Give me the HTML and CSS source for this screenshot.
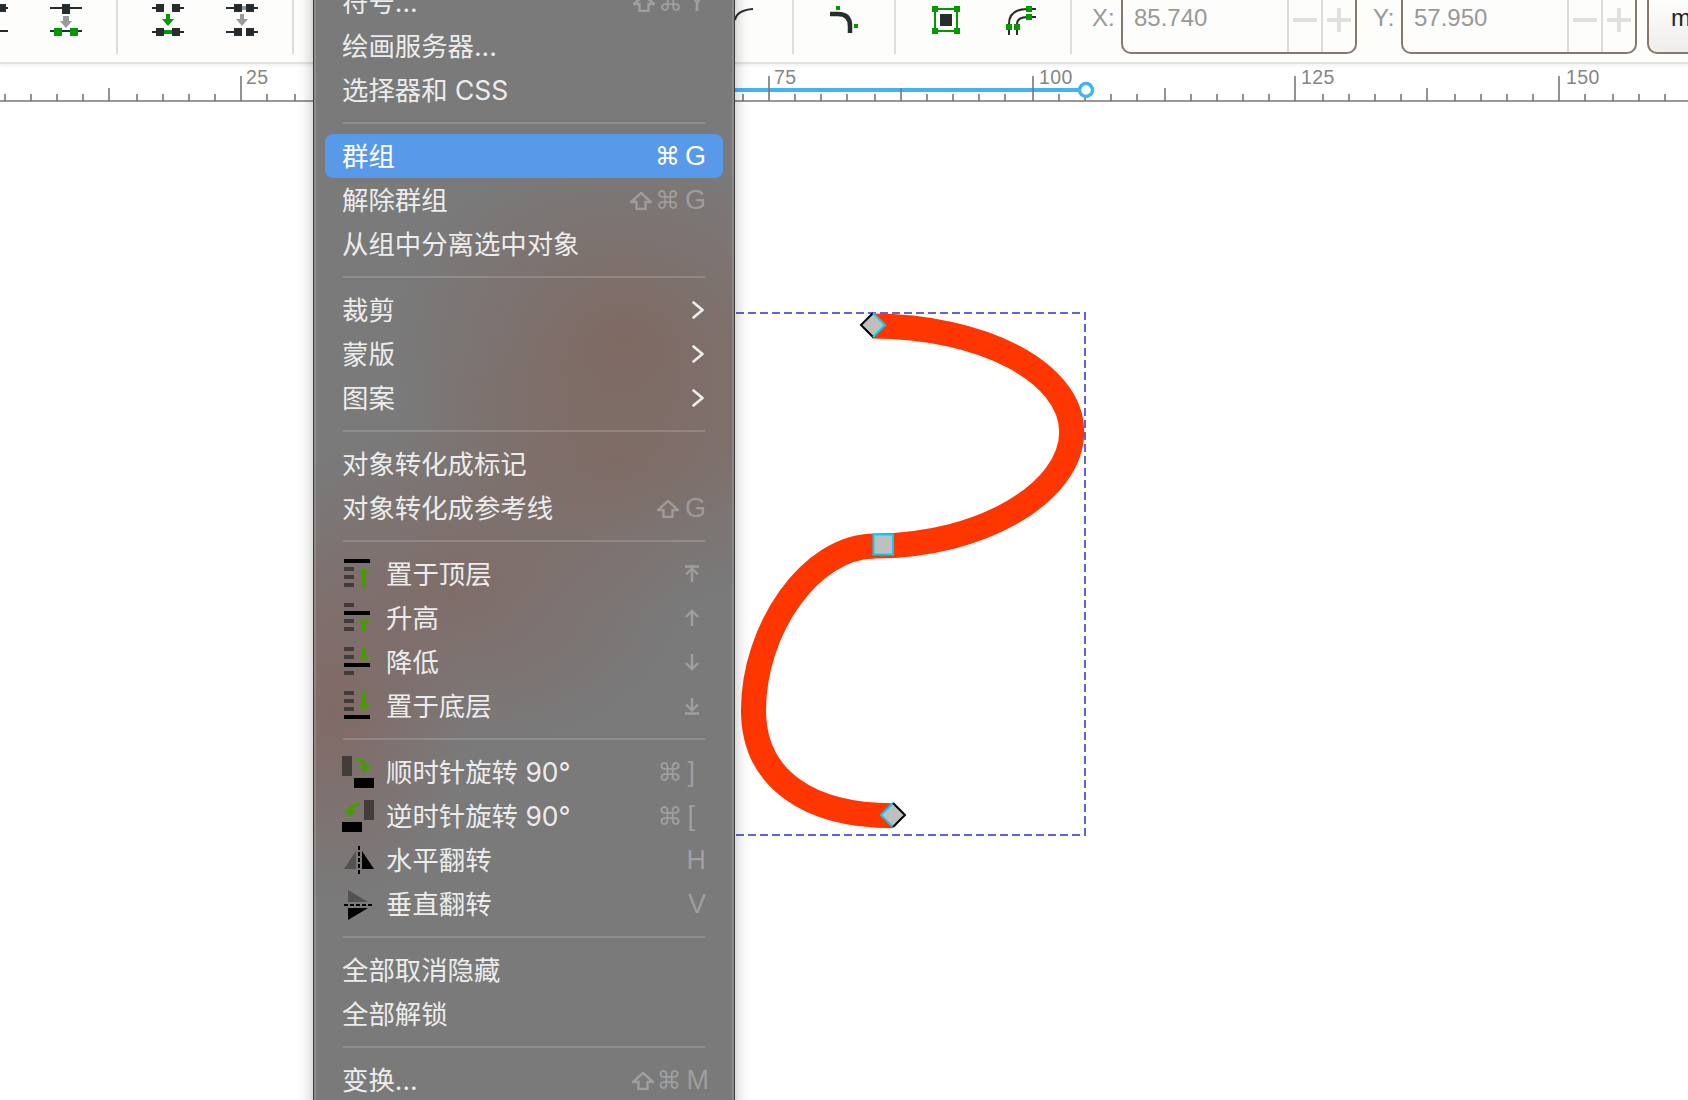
FILE: index.html
```html
<!DOCTYPE html>
<html lang="zh-CN">
  <head>
    <meta charset="utf-8">
    <title>Inkscape</title>
    <link rel="stylesheet" href="styles.css">
  </head>

  <body>
    <div class="window">
      <!-- snap / coordinate toolbar -->
      <header class="toolbar">
        <div class="tool-group group-first">
          <svg class="tool" viewBox="0 0 32 44"><rect x="22" y="4" width="8" height="8" class="dark"/><rect x="16" y="7" width="16" height="2" class="dark"/><rect x="16" y="30" width="16" height="2" class="dark"/></svg>
          <svg class="tool" viewBox="0 0 32 44"><rect y="7" width="32" height="2" class="dark"/><rect x="12" y="4" width="8" height="10" class="dark"/><path d="M13 16h6v5h3l-6 7-6-7h3z" class="grey"/><rect y="30" width="32" height="2" class="dark"/><rect x="4" y="28" width="8" height="8" class="green"/><rect x="20" y="28" width="8" height="8" class="green"/></svg>
        </div>
        <div class="tool-group group-snap">
          <svg class="tool" viewBox="0 0 32 44"><path d="M0 7h4v2H0zM28 7h4v2h-4zM0 31h4v2H0zM28 31h4v2h-4z" class="dark"/><rect x="4" y="4" width="8" height="8" class="dark"/><rect x="20" y="4" width="8" height="8" class="dark"/><path d="M14 14h4v5h4l-6 7-6-7h4z" class="green"/><rect x="4" y="28" width="8" height="8" class="dark"/><rect x="20" y="28" width="8" height="8" class="dark"/><rect x="12" y="30" width="8" height="4" class="green"/></svg>
          <svg class="tool" viewBox="0 0 32 44"><path d="M0 7h8v2H0zM28 7h4v2h-4zM0 31h8v2H0zM28 31h4v2h-4z" class="dark"/><rect x="16" y="6" width="4" height="4" class="grey"/><rect x="8" y="4" width="8" height="8" class="dark"/><rect x="20" y="4" width="8" height="8" class="dark"/><path d="M14 14h4v5h4l-6 7-6-7h4z" class="grey"/><rect x="8" y="28" width="8" height="8" class="dark"/><rect x="20" y="28" width="8" height="8" class="dark"/></svg>
        </div>
        <div class="tool-group group-behind">
          <svg class="tool" viewBox="0 0 32 44"><path d="M12 20Q14 10 30 9" class="line-thin"/></svg>
        </div>
        <div class="tool-group group-mid">
          <svg class="tool" viewBox="0 0 32 44"><path d="M2 14H10Q22 14 22 26V33" class="line-thick"/><rect x="8" y="6" width="4" height="4" class="green"/><rect x="26" y="24" width="4" height="4" class="green"/></svg>
        </div>
        <div class="tool-group group-mid group-last">
          <svg class="tool" viewBox="0 0 32 44"><rect x="5" y="9" width="22" height="22" class="frame"/><rect x="10" y="14" width="12" height="12" class="dark"/><path d="M2 6h6v6H2zM24 6h6v6h-6zM2 28h6v6H2zM24 28h6v6h-6z" class="green"/></svg>
          <svg class="tool" viewBox="0 0 32 44"><path d="M5 35V24Q5 9 24 9H32M13 35V24Q13 17 24 17H32" class="line-thin"/><path d="M2 24h6v6H2zM10 24h6v6h-6zM22 6h6v6h-6zM22 14h6v6h-6z" class="green"/></svg>
        </div>
        <span class="coord-label label-x">X:</span>
        <div class="field field-x">
          <span class="field-value">85.740</span>
          <span class="step"><i class="minus"></i></span>
          <span class="step"><i class="plus"></i></span>
        </div>
        <span class="coord-label label-y">Y:</span>
        <div class="field">
          <span class="field-value">57.950</span>
          <span class="step"><i class="minus"></i></span>
          <span class="step"><i class="plus"></i></span>
        </div>
        <div class="unit-btn">mm</div>
      </header>

      <!-- ruler -->
      <svg class="ruler" viewBox="0 64 1688 38">
        <rect x="700" y="88" width="386" height="4" fill="#42b4f6"/>
        <path class="ticks" d="M0 101H1688M241 76V101M769 76V101M1033 76V101M1295 76V101M1559 76V101M109 88V101M901 88V101M1165 88V101M1427 88V101M5 94V101M31 94V101M57 94V101M83 94V101M137 94V101M163 94V101M189 94V101M215 94V101M267 94V101M295 94V101M743 94V101M795 94V101M821 94V101M847 94V101M875 94V101M927 94V101M953 94V101M979 94V101M1005 94V101M1059 94V101M1085 94V101M1111 94V101M1137 94V101M1191 94V101M1217 94V101M1243 94V101M1269 94V101M1323 94V101M1349 94V101M1375 94V101M1401 94V101M1455 94V101M1481 94V101M1507 94V101M1533 94V101M1585 94V101M1613 94V101M1639 94V101M1665 94V101"/>
        <circle cx="1086" cy="90" r="6.5" fill="#fff" stroke="#42b4f6" stroke-width="3.5"/>
        <text x="246" y="84">25</text>
        <text x="774" y="84">75</text>
        <text x="1039" y="84">100</text>
        <text x="1301" y="84">125</text>
        <text x="1566" y="84">150</text>
      </svg>

      <!-- drawing -->
      <svg class="canvas" viewBox="0 102 1688 998">
        <path class="bbox" d="M700 313H1085V835H700"/>
        <path class="stroke" d="M872 326C982 326 1071.7 372 1071.7 432C1071.7 492 982 546 875 546C810 546 753.5 630 753.5 710C753.5 780 810 815.7 893 815.7"/>
        <path class="node" d="M873 313L885 325L873 337L861 325Z"/>
        <path class="edge-black" d="M873 337L861 325L873 313"/>
        <path class="edge-cyan" d="M873 313L885 325L873 337"/>
        <rect class="node edge-cyan" x="873.5" y="534.5" width="19.5" height="20"/>
        <path class="node" d="M893 803L905 815L893 827L881 815Z"/>
        <path class="edge-cyan" d="M893 827L881 815L893 803"/>
        <path class="edge-black" d="M893 803L905 815L893 827"/>
      </svg>

      <!-- context menu -->
      <div class="menu">
        <div class="row"><span class="label">符号...</span><span class="keys off"><svg class="shift" viewBox="0 0 22 18"><path d="M11 1L21 10H15.5V17H6.5V10H1Z"/></svg><b>⌘</b>Y</span></div>
        <div class="row"><span class="label">绘画服务器...</span></div>
        <div class="row"><span class="label">选择器和 CSS</span></div>
        <div class="sep"></div>
        <div class="row active"><span class="label">群组</span><span class="keys"><b>⌘</b>G</span></div>
        <div class="row"><span class="label">解除群组</span><span class="keys off"><svg class="shift" viewBox="0 0 22 18"><path d="M11 1L21 10H15.5V17H6.5V10H1Z"/></svg><b>⌘</b>G</span></div>
        <div class="row"><span class="label">从组中分离选中对象</span></div>
        <div class="sep"></div>
        <div class="row"><span class="label">裁剪</span><svg class="chevron" viewBox="0 0 12 18"><path d="M1.5 1.5L10.5 9L1.5 16.5"/></svg></div>
        <div class="row"><span class="label">蒙版</span><svg class="chevron" viewBox="0 0 12 18"><path d="M1.5 1.5L10.5 9L1.5 16.5"/></svg></div>
        <div class="row"><span class="label">图案</span><svg class="chevron" viewBox="0 0 12 18"><path d="M1.5 1.5L10.5 9L1.5 16.5"/></svg></div>
        <div class="sep"></div>
        <div class="row"><span class="label">对象转化成标记</span></div>
        <div class="row"><span class="label">对象转化成参考线</span><span class="keys off"><svg class="shift" viewBox="0 0 22 18"><path d="M11 1L21 10H15.5V17H6.5V10H1Z"/></svg>G</span></div>
        <div class="sep"></div>
        <div class="row">
          <span class="label"><svg class="icon" viewBox="0 0 32 32"><rect x="2" y="1" width="26" height="4" class="bar"/><path d="M2 9h10v4H2zM2 17h10v4H2zM2 25h10v4H2z" class="dash"/><path d="M22 10l6 6h-4v13h-4V16h-4z" class="arrow"/></svg>置于顶层</span>
          <svg class="arrow-key" viewBox="0 0 16 18"><path d="M1 1.5H15M8 17V4M2 9.5L8 3.5L14 9.5"/></svg>
        </div>
        <div class="row">
          <span class="label"><svg class="icon" viewBox="0 0 32 32"><rect x="2" y="9" width="26" height="4" class="bar"/><path d="M2 1h10v4H2zM2 17h10v4H2zM2 25h10v4H2z" class="dash"/><path d="M22 16l6 5h-4v8h-4v-8h-4z" class="arrow"/></svg>升高</span>
          <svg class="arrow-key" viewBox="0 0 16 18"><path d="M8 17V2M2 8L8 2L14 8"/></svg>
        </div>
        <div class="row">
          <span class="label"><svg class="icon" viewBox="0 0 32 32"><rect x="2" y="17" width="26" height="4" class="bar"/><path d="M2 1h10v4H2zM2 9h10v4H2zM2 25h10v4H2z" class="dash"/><path d="M20 1h4v8h4l-6 6-6-6h4z" class="arrow"/></svg>降低</span>
          <svg class="arrow-key" viewBox="0 0 16 18"><path d="M8 1V16M2 10L8 16L14 10"/></svg>
        </div>
        <div class="row">
          <span class="label"><svg class="icon" viewBox="0 0 32 32"><rect x="2" y="25" width="26" height="4" class="bar"/><path d="M2 1h10v4H2zM2 9h10v4H2zM2 17h10v4H2z" class="dash"/><path d="M20 1h4v13h4l-6 7-6-7h4z" class="arrow"/></svg>置于底层</span>
          <svg class="arrow-key" viewBox="0 0 16 18"><path d="M8 1V13M2 7.5L8 13.5L14 7.5M1 16.5H15"/></svg>
        </div>
        <div class="sep"></div>
        <div class="row">
          <span class="label"><svg class="icon" viewBox="0 0 32 32"><rect width="10" height="20" class="dash"/><rect x="12" y="22" width="20" height="10" class="bar"/><path d="M14 3Q23 4 23 11" class="arrow-line"/><path d="M17 10H29L23 17Z" class="arrow"/></svg>顺时针旋转 90°</span>
          <span class="keys off bracket"><b>⌘</b>]</span>
        </div>
        <div class="row">
          <span class="label"><svg class="icon" viewBox="0 0 32 32"><rect x="22" width="10" height="20" class="dash"/><rect y="22" width="20" height="10" class="bar"/><path d="M18 4Q8 5 8 11" class="arrow-line"/><path d="M2 10H14L8 17Z" class="arrow"/></svg>逆时针旋转 90°</span>
          <span class="keys off bracket"><b>⌘</b>[</span>
        </div>
        <div class="row">
          <span class="label"><svg class="icon" viewBox="0 0 32 32"><path d="M2 25H14V7Z" class="flip-grey"/><path d="M20 7V25H32Z" class="bar"/><path d="M17 2V30" class="flip-line"/></svg>水平翻转</span>
          <span class="keys off">H</span>
        </div>
        <div class="row">
          <span class="label"><svg class="icon" viewBox="0 0 32 32"><path d="M6 2V14H26Z" class="flip-grey"/><path d="M6 20H26L6 32Z" class="bar"/><path d="M2 17H30" class="flip-line"/></svg>垂直翻转</span>
          <span class="keys off">V</span>
        </div>
        <div class="sep"></div>
        <div class="row"><span class="label">全部取消隐藏</span></div>
        <div class="row"><span class="label">全部解锁</span></div>
        <div class="sep"></div>
        <div class="row"><span class="label">变换...</span><span class="keys off keys-wide"><svg class="shift" viewBox="0 0 22 18"><path d="M11 1L21 10H15.5V17H6.5V10H1Z"/></svg><b>⌘</b>M</span></div>
      </div>
    </div>
  </body>
</html>
```

FILE: styles.css
```css
* {
  box-sizing: border-box;
  margin: 0;
}
html, body {
  height: 100%;
  overflow: hidden;
  background: #fff;
}
.window {
  position: relative;
  width: 1688px;
  height: 1100px;
  overflow: hidden;
  display: flex;
  flex-direction: column;
  font-family: "Liberation Sans", sans-serif;
}

/* toolbar */
.toolbar {
  display: flex;
  align-items: flex-start;
  flex: none;
  height: 64px;
  background: #fdfdfb;
  border-bottom: 2px solid #e2e2df;
  box-shadow: 0 1px 4px rgba(0, 0, 0, 0.08);
  overflow: hidden;
}
.tool-group {
  display: flex;
  gap: 42px;
  height: 54px;
  border-right: 2px solid #dededb;
  flex: none;
}
.group-first { width: 118px; padding-right: 34px; justify-content: flex-end; }
.group-snap { padding: 0 34px; }
.group-behind { padding: 0 37px 0 429px; }
.group-mid { padding: 0 34px; }
.group-last { margin-right: 20px; }
.tool {
  width: 32px;
  height: 44px;
  flex: none;
  overflow: visible;
}
.dark { fill: #272c2f; }
.grey { fill: #9a9a9a; }
.green { fill: #009a00; }
.frame { fill: none; stroke: #009a00; stroke-width: 2; }
.line-thin { fill: none; stroke: #272c2f; stroke-width: 2; }
.line-thick { fill: none; stroke: #272c2f; stroke-width: 4.5; }

.coord-label {
  flex: none;
  font-size: 24px;
  line-height: 36px;
  color: #999;
}
.label-x { width: 29px; }
.label-y { width: 28px; margin-left: 16px; }
.field {
  display: flex;
  flex: none;
  width: 236px;
  height: 54px;
  border: 2px solid #85796e;
  border-top: none;
  border-radius: 0 0 10px 10px;
}
.field-value {
  flex: 1;
  padding-left: 11px;
  font-size: 24px;
  line-height: 36px;
  color: #999;
}
.step {
  position: relative;
  flex: none;
  width: 34px;
  border-left: 2px solid #dedbd6;
}
.step i {
  display: block;
  width: 24px;
  height: 4px;
  margin: 18px 0 0 4px;
  background: #e0e0dc;
}
.plus {
  position: relative;
}
.plus::after {
  content: "";
  position: absolute;
  left: 10px;
  top: -10px;
  width: 4px;
  height: 24px;
  background: #e0e0dc;
}
.unit-btn {
  flex: none;
  width: 80px;
  height: 54px;
  margin-left: 10px;
  padding-left: 22px;
  font-size: 24px;
  line-height: 36px;
  color: #222;
  background: linear-gradient(#fdfdfb, #eeedeb);
  border: 2px solid #85796e;
  border-top: none;
  border-right: none;
  border-radius: 0 0 0 10px;
}

/* ruler */
.ruler {
  display: block;
  flex: none;
  width: 1688px;
  height: 38px;
}
.ticks {
  fill: none;
  stroke: #777;
  stroke-width: 1.6;
}
.ruler text {
  font-size: 19.5px;
  letter-spacing: 0.4px;
  fill: #858585;
}

/* canvas */
.canvas {
  display: block;
  flex: 1;
  width: 1688px;
}
.bbox {
  fill: none;
  stroke: #6262e0;
  stroke-width: 2;
  stroke-dasharray: 8 4;
}
.stroke {
  fill: none;
  stroke: #ff3600;
  stroke-width: 25;
}
.node { fill: #bfbfbf; }
.edge-black { fill: none; stroke: #000; stroke-width: 2; }
.edge-cyan { stroke: #00d0ff; stroke-width: 2; }
path.edge-cyan { fill: none; }

/* menu */
.menu {
  position: absolute;
  left: 313px;
  top: -20px;
  width: 422px;
  padding: 0 1px 40px;
  border-left: 1px solid #3a3a3a;
  border-right: 1px solid #3a3a3a;
  box-shadow: 0 0 14px rgba(0, 0, 0, 0.28), inset -2px 0 0 rgba(255, 255, 255, 0.14), inset 2px 0 0 rgba(255, 255, 255, 0.14);
  font-family: Inter, "Noto Sans CJK SC", sans-serif;
  font-size: 26.4px;
  color: #ececec;
  background:
    radial-gradient(ellipse 230px 190px at 310px 360px, rgba(128, 104, 97, 0.9), rgba(128, 104, 97, 0) 100%),
    radial-gradient(ellipse 230px 150px at 300px 480px, rgba(128, 104, 97, 0.7), rgba(128, 104, 97, 0) 100%),
    radial-gradient(ellipse 230px 160px at 140px 610px, rgba(128, 106, 102, 0.85), rgba(128, 106, 102, 0) 100%),
    radial-gradient(ellipse 130px 190px at 20px 730px, rgba(130, 104, 100, 0.9), rgba(130, 104, 100, 0) 100%),
    #7a7a7a;
}
.row {
  display: flex;
  align-items: center;
  justify-content: space-between;
  height: 44px;
  margin: 0 10px;
  padding: 0 17px;
  white-space: nowrap;
  border-radius: 8px;
}
.active {
  color: #fff;
  background: #5899ea;
}
.sep {
  height: 2px;
  margin: 10px 28px;
  background: rgba(255, 255, 255, 0.16);
}
.label {
  display: flex;
  align-items: center;
  gap: 12px;
  padding-bottom: 4px;
}
.keys {
  display: flex;
  align-items: center;
  gap: 5px;
  padding-top: 1px;
  font-family: "Liberation Sans", sans-serif;
  font-size: 27px;
  color: #fff;
}
.keys b {
  font-family: "DejaVu Sans", sans-serif;
  font-size: 25px;
  font-weight: 400;
}
.off { color: rgba(255, 255, 255, 0.28); }
.keys-wide { margin-right: -3px; }
.bracket { margin-right: 11px; }
.shift {
  width: 22px;
  height: 18px;
  margin-right: 1px;
  fill: none;
  stroke: rgba(255, 255, 255, 0.28);
  stroke-width: 2.4;
}
.shift + b { margin-left: -3px; }
.chevron {
  width: 12px;
  height: 18px;
  margin-right: 2px;
  fill: none;
  stroke: #eee;
  stroke-width: 2.6;
  stroke-linecap: round;
  stroke-linejoin: round;
}
.arrow-key {
  width: 16px;
  height: 18px;
  margin-right: 6px;
  fill: none;
  stroke: rgba(255, 255, 255, 0.28);
  stroke-width: 2.4;
}
.icon {
  width: 32px;
  height: 32px;
  flex: none;
  transform: translateY(2px);
}
.bar { fill: #000; }
.dash { fill: #443c3a; }
.arrow { fill: #4a9a08; }
.arrow-line { fill: none; stroke: #4a9a08; stroke-width: 3.5; }
.flip-grey { fill: #555150; }
.flip-line { fill: none; stroke: #000; stroke-width: 2; stroke-dasharray: 4 2; }
```
